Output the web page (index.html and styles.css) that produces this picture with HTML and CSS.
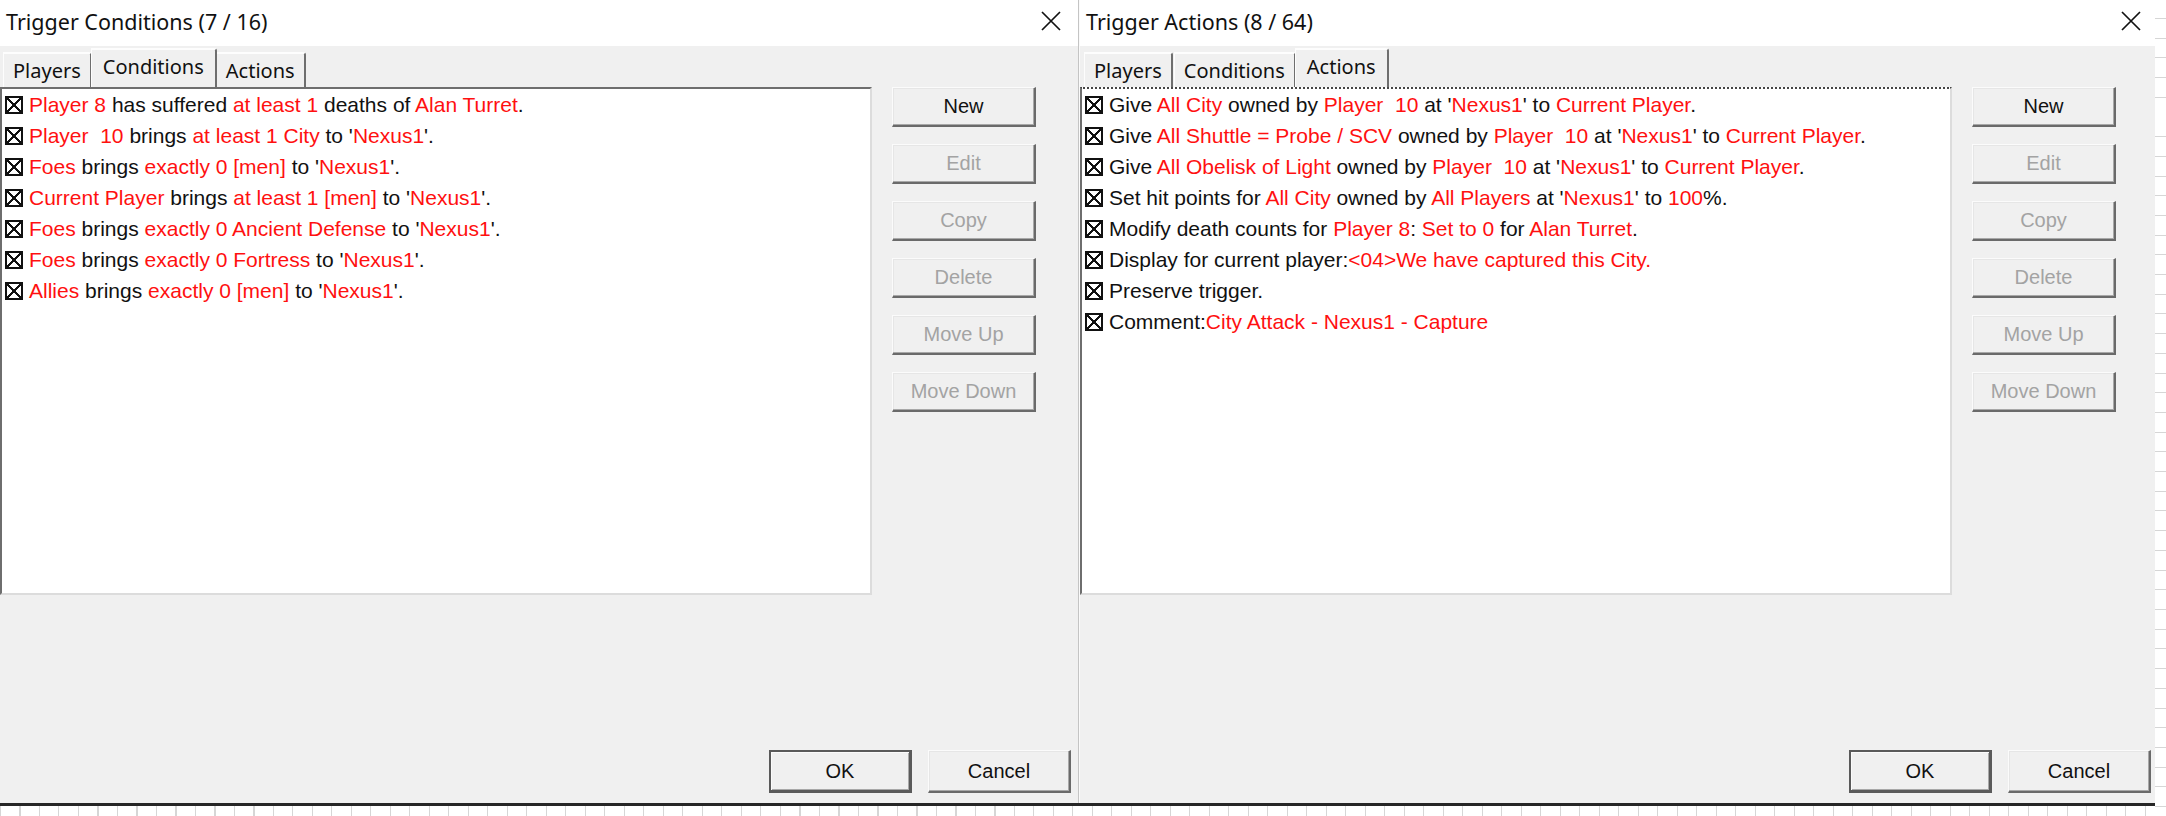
FILE: index.html
```html
<!DOCTYPE html>
<html>
<head>
<meta charset="utf-8">
<title>Trigger dialogs</title>
<link rel="stylesheet" href="styles.css">
</head>
<body>
<div class="screen">
  <div class="dialogs-col">
    <div class="dialogs-row">
      <div class="dialog-wrap">
        <section class="dialog">
          <header class="titlebar">
            <span class="title">Trigger Conditions (7 / 16)</span>
            <svg class="close" viewBox="0 0 22 22"><path d="M2 2 L20 20 M20 2 L2 20" stroke="#111" stroke-width="1.7" fill="none"/></svg>
          </header>
          <div class="body">
            <div class="tabs">
              <div class="tab">Players</div>
              <div class="tab active">Conditions</div>
              <div class="tab">Actions</div>
            </div>
            <div class="main">
              <div class="list">
                <div class="row"><span class="cb"></span><span class="txt"><span class="v">Player 8</span> has suffered <span class="v">at least 1</span> deaths of <span class="v">Alan Turret</span>.</span></div>
                <div class="row"><span class="cb"></span><span class="txt"><span class="v">Player  10</span> brings <span class="v">at least 1 City</span> to '<span class="v">Nexus1</span>'.</span></div>
                <div class="row"><span class="cb"></span><span class="txt"><span class="v">Foes</span> brings <span class="v">exactly 0 [men]</span> to '<span class="v">Nexus1</span>'.</span></div>
                <div class="row"><span class="cb"></span><span class="txt"><span class="v">Current Player</span> brings <span class="v">at least 1 [men]</span> to '<span class="v">Nexus1</span>'.</span></div>
                <div class="row"><span class="cb"></span><span class="txt"><span class="v">Foes</span> brings <span class="v">exactly 0 Ancient Defense</span> to '<span class="v">Nexus1</span>'.</span></div>
                <div class="row"><span class="cb"></span><span class="txt"><span class="v">Foes</span> brings <span class="v">exactly 0 Fortress</span> to '<span class="v">Nexus1</span>'.</span></div>
                <div class="row"><span class="cb"></span><span class="txt"><span class="v">Allies</span> brings <span class="v">exactly 0 [men]</span> to '<span class="v">Nexus1</span>'.</span></div>
              </div>
              <div class="side">
                <button class="btn">New</button>
                <button class="btn" disabled>Edit</button>
                <button class="btn" disabled>Copy</button>
                <button class="btn" disabled>Delete</button>
                <button class="btn" disabled>Move Up</button>
                <button class="btn" disabled>Move Down</button>
              </div>
            </div>
            <div class="footer">
              <button class="btn big default">OK</button>
              <button class="btn big">Cancel</button>
            </div>
          </div>
        </section>
      </div>
      <div class="sep"></div>
      <div class="dialog-wrap clipped">
        <section class="dialog">
          <header class="titlebar">
            <span class="title">Trigger Actions (8 / 64)</span>
            <svg class="close" viewBox="0 0 22 22"><path d="M2 2 L20 20 M20 2 L2 20" stroke="#111" stroke-width="1.7" fill="none"/></svg>
          </header>
          <div class="body">
            <div class="tabs shifted">
              <div class="tab">Players</div>
              <div class="tab">Conditions</div>
              <div class="tab active">Actions</div>
            </div>
            <div class="main">
              <div class="list focused">
                <div class="row"><span class="cb"></span><span class="txt">Give <span class="v">All City</span> owned by <span class="v">Player  10</span> at '<span class="v">Nexus1</span>' to <span class="v">Current Player</span>.</span></div>
                <div class="row"><span class="cb"></span><span class="txt">Give <span class="v">All Shuttle = Probe / SCV</span> owned by <span class="v">Player  10</span> at '<span class="v">Nexus1</span>' to <span class="v">Current Player</span>.</span></div>
                <div class="row"><span class="cb"></span><span class="txt">Give <span class="v">All Obelisk of Light</span> owned by <span class="v">Player  10</span> at '<span class="v">Nexus1</span>' to <span class="v">Current Player</span>.</span></div>
                <div class="row"><span class="cb"></span><span class="txt">Set hit points for <span class="v">All City</span> owned by <span class="v">All Players</span> at '<span class="v">Nexus1</span>' to <span class="v">100</span>%.</span></div>
                <div class="row"><span class="cb"></span><span class="txt">Modify death counts for <span class="v">Player 8</span>: <span class="v">Set to 0</span> for <span class="v">Alan Turret</span>.</span></div>
                <div class="row"><span class="cb"></span><span class="txt">Display for current player:<span class="v">&lt;04&gt;We have captured this City.</span></span></div>
                <div class="row"><span class="cb"></span><span class="txt">Preserve trigger.</span></div>
                <div class="row"><span class="cb"></span><span class="txt">Comment:<span class="v">City Attack - Nexus1 - Capture</span></span></div>
              </div>
              <div class="side">
                <button class="btn">New</button>
                <button class="btn" disabled>Edit</button>
                <button class="btn" disabled>Copy</button>
                <button class="btn" disabled>Delete</button>
                <button class="btn" disabled>Move Up</button>
                <button class="btn" disabled>Move Down</button>
              </div>
            </div>
            <div class="footer">
              <button class="btn big default">OK</button>
              <button class="btn big">Cancel</button>
            </div>
          </div>
        </section>
      </div>
    </div>
    <div class="bottom-edge"></div>
    <div class="sheet-bottom"></div>
  </div>
  <div class="sheet-edge"></div>
</div>
</body>
</html>
```

FILE: styles.css
```css
* { box-sizing: border-box; }
html, body { margin: 0; padding: 0; }
body {
  width: 2166px;
  height: 816px;
  overflow: hidden;
  background: #fff;
  font-family: "Liberation Sans", Arial, sans-serif;
}
.screen { display: flex; height: 816px; }
.dialogs-col { width: 2155px; display: flex; flex-direction: column; flex: none; }
.dialogs-row { display: flex; height: 803px; flex: none; }
.dialog-wrap { width: 1078px; height: 803px; overflow: hidden; flex: none; }
.dialog-wrap.clipped { width: 1075px; }
.sep { width: 2px; flex: none; background: linear-gradient(to right, #c4c4c4 0 1px, #fafafa 1px 2px); }
.dialog {
  width: 1078px;
  height: 803px;
  display: flex;
  flex-direction: column;
  background: #f0f0f0;
}
.titlebar {
  height: 46px;
  flex: none;
  background: #fff;
  display: flex;
  align-items: center;
  justify-content: space-between;
  padding: 0 16px 0 6px;
}
.title {
  font-family: "Noto Sans", "Open Sans", sans-serif;
  font-size: 21.5px;
  color: #111;
  padding-bottom: 4px;
}
.close { width: 22px; height: 22px; display: block; margin-bottom: 4px; }
.body { flex: 1; display: flex; flex-direction: column; padding-top: 2px; }
.tabs { display: flex; align-items: flex-end; height: 39px; padding-left: 3px; flex: none; }
.tabs.shifted { padding-left: 4px; }
.tab {
  height: 35px;
  padding: 0 9px;
  font-family: "Noto Sans", "Open Sans", sans-serif;
  font-size: 20px;
  color: #111;
  display: flex;
  align-items: center;
  border-style: solid;
  border-width: 2px 2px 0 1px;
  border-color: #fdfdfd #6e6e6e transparent #fdfdfd;
  border-top-right-radius: 3px;
  margin-right: 1px;
  background: #f0f0f0;
}
.tab.active {
  height: 39px;
  padding: 0 11px 4px;
  margin-left: -2px;
  margin-right: -1px;
  position: relative;
  z-index: 1;
}
.main { display: flex; height: 508px; flex: none; }
.list {
  width: 872px;
  height: 508px;
  flex: none;
  background: #fff;
  border-style: solid;
  border-width: 2px;
  border-color: #6e6e6e #dcdcdc #dcdcdc #6e6e6e;
  padding: 0 0 0 3px;
}
.list.focused { border-top-style: dotted; border-top-color: #444; }
.row {
  height: 31px;
  display: flex;
  align-items: center;
  white-space: pre;
  font-size: 21px;
  color: #111;
}
.cb {
  width: 18px;
  height: 18px;
  flex: none;
  margin-right: 6px;
  border: 2px solid #111;
  background:
    linear-gradient(45deg, transparent calc(50% - 0.75px), #111 calc(50% - 0.75px), #111 calc(50% + 0.75px), transparent calc(50% + 0.75px)),
    linear-gradient(-45deg, transparent calc(50% - 0.75px), #111 calc(50% - 0.75px), #111 calc(50% + 0.75px), transparent calc(50% + 0.75px));
}
.v { color: #ff1010; }
.side {
  margin-left: 20px;
  display: flex;
  flex-direction: column;
  gap: 17px;
}
.btn {
  width: 144px;
  height: 40px;
  padding: 0;
  background: #f0f0f0;
  border-style: solid;
  border-width: 1px 2px 2px 1px;
  border-color: #fbfbfb #6a6a6a #6a6a6a #fbfbfb;
  box-shadow: inset -1px -1px 0 #a8a8a8, inset 1px 1px 0 #e6e6e6;
  font-family: "Liberation Sans", Arial, sans-serif;
  font-size: 20px;
  color: #111;
}
.btn:disabled { color: #a3a3a3; }
.footer {
  margin-top: auto;
  display: flex;
  justify-content: flex-end;
  gap: 16px;
  padding: 0 7px 10px 0;
}
.btn.big { width: 143px; height: 43px; }
.btn.default {
  border: 2px solid #5a5a5a;
  border-bottom-width: 3px;
  border-right-width: 3px;
  box-shadow: inset 1px 1px 0 #fbfbfb, inset -1px -1px 0 #a8a8a8;
}
.bottom-edge { height: 3px; flex: none; background: #262626; }
.sheet-bottom {
  flex: 1;
  background: repeating-linear-gradient(to right, #d6d6d6 0 1px, #fff 1px 19.5px);
}
.sheet-edge {
  flex: 1;
  background: repeating-linear-gradient(to bottom, #fff 0 18px, #d6d6d6 18px 19px, #fff 19px 19.7px);
}
```
